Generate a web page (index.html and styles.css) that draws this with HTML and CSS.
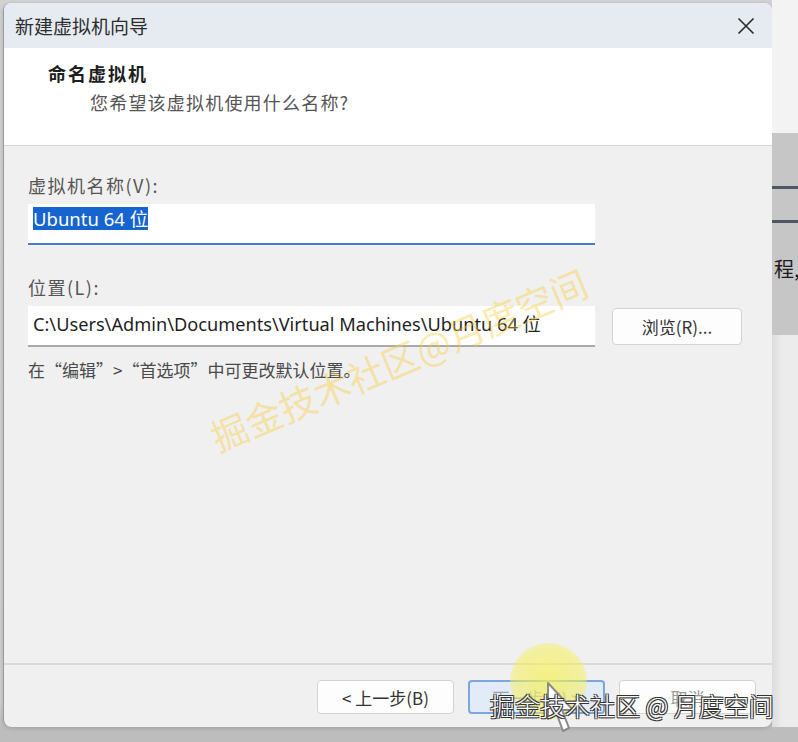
FILE: index.html
```html
<!DOCTYPE html>
<html lang="zh-CN">
<head>
    <meta charset="UTF-8">
    <meta name="viewport" content="width=device-width, initial-scale=1.0">
    <title>新建虚拟机向导</title>
    <link rel="stylesheet" href="styles.css">
</head>
<body>
    <div class="screen">
        <div class="dialog">
            <div class="titlebar">
                <span class="title">新建虚拟机向导</span>
                <svg class="close" width="18" height="18" viewBox="0 0 18 18">
                    <path d="M1.5 1.5 L16.5 16.5 M16.5 1.5 L1.5 16.5" stroke="#2a2a2a" stroke-width="1.6" fill="none"/>
                </svg>
            </div>

            <div class="header">
                <div class="header-title">命名虚拟机</div>
                <div class="header-sub">您希望该虚拟机使用什么名称?</div>
            </div>

            <div class="content">
                <div class="label">虚拟机名称(V):</div>
                <div class="field field-active"><span class="selected">Ubuntu 64 位</span></div>

                <div class="label label-gap">位置(L):</div>
                <div class="field-row">
                    <div class="field">C:\Users\Admin\Documents\Virtual Machines\Ubuntu 64 位</div>
                    <button class="btn btn-browse">浏览(R)...</button>
                </div>

                <div class="hint">在“编辑”&gt;“首选项”中可更改默认位置。</div>
            </div>

            <div class="footer">
                <button class="btn">&lt; 上一步(B)</button>
                <button class="btn btn-primary">下一步(N) &gt;</button>
                <button class="btn btn-cancel">取消</button>
            </div>
        </div>

        <div class="side">
            <div class="side-top"></div>
            <div class="side-band">
                <div class="side-line"></div>
                <div class="side-line"></div>
                <div class="side-text">程,</div>
            </div>
            <div class="side-bottom"></div>
        </div>
    </div>

    <!-- overlays from the recording -->
    <div class="watermark">掘金技术社区@月度空间</div>
    <div class="click-glow"></div>
    <svg class="cursor" width="30" height="54" viewBox="0 0 30 54">
        <path d="M2 2 L2 38 L10 31 L17 50 L23 47 L16 29 L27 29 Z" fill="#ffffff" stroke="#8a8a8a" stroke-width="2" stroke-linejoin="round"/>
    </svg>
    <div class="caption">掘金技术社区 @ 月度空间</div>
</body>
</html>
```

FILE: styles.css
```css
* {
    box-sizing: border-box;
}

body {
    margin: 0;
    width: 798px;
    height: 742px;
    overflow: hidden;
    background-color: #c4c4c4;
    font-family: "Noto Sans CJK SC", "Noto Sans", sans-serif;
    color: #333333;
    position: relative;
}

.screen {
    display: flex;
    height: 742px;
    background: linear-gradient(#d2d2d2, #cfcfcf 700px, #bdbdbd 730px);
}

.dialog {
    flex-shrink: 0;
    width: 769px;
    height: 724px;
    margin: 3px 0 0 3px;
    display: flex;
    flex-direction: column;
    background-color: #f0f0f0;
    border-left: 1px solid #9c9c9c;
    border-radius: 8px;
    overflow: hidden;
    box-shadow: 0 1px 4px rgba(0, 0, 0, 0.18);
}

.titlebar {
    height: 45px;
    flex-shrink: 0;
    display: flex;
    align-items: center;
    justify-content: space-between;
    padding: 0 17px 0 11px;
    background-color: #e6ebf2;
}

.title {
    font-size: 19px;
    color: #2d2d2d;
}

.header {
    height: 98px;
    flex-shrink: 0;
    background-color: #ffffff;
    border-bottom: 1px solid #d4d4d4;
    padding: 13px 0 0 44px;
}

.header-title {
    font-size: 18px;
    line-height: 24px;
    font-weight: bold;
    letter-spacing: 2px;
    color: #1e1e1e;
}

.header-sub {
    margin: 5px 0 0 42px;
    font-size: 18px;
    line-height: 24px;
    letter-spacing: 1.2px;
    color: #555555;
}

.content {
    flex: 1;
    padding: 27px 0 0 24px;
}

.label {
    font-size: 18px;
    line-height: 24px;
    letter-spacing: 1.5px;
    color: #555555;
    margin-bottom: 7px;
}

.label-gap {
    margin-top: 30px;
}

.field {
    width: 567px;
    height: 41px;
    background-color: #ffffff;
    border-bottom: 2px solid #a9a9a9;
    padding: 7px 0 0 5px;
    font-family: "Noto Sans", "Noto Sans CJK SC", sans-serif;
    font-size: 18.2px;
    line-height: 23px;
    color: #1f1f1f;
    white-space: nowrap;
}

.field-active {
    border-bottom-color: #4b7ccc;
    padding-top: 3px;
}

.selected {
    display: inline-block;
    background-color: #1664d0;
    color: #ffffff;
    font-size: 18.5px;
}

.field-row {
    display: flex;
    align-items: center;
    gap: 17px;
}

.hint {
    margin-top: 11px;
    font-size: 17px;
    line-height: 24px;
    color: #4a4a4a;
}

.btn {
    font-family: "Noto Sans CJK SC", "Noto Sans", sans-serif;
    font-size: 17px;
    color: #333333;
    background-color: #fdfdfd;
    border: 1px solid #d3d3d3;
    border-radius: 4px;
    cursor: pointer;
}

.btn-browse {
    width: 130px;
    height: 37px;
}

.footer {
    height: 64px;
    flex-shrink: 0;
    border-top: 2px solid #d9d9d9;
    display: flex;
    justify-content: flex-end;
    gap: 14px;
    padding: 15px 16px 0 0;
}

.footer .btn {
    width: 137px;
    height: 34px;
}

.btn-primary {
    background-color: #e2ecf8;
    border: 2px solid #7ba7dd;
    color: #9aa3ad;
}

.btn-cancel {
    color: #9a9a9a;
}

.side {
    flex: 1;
    display: flex;
    flex-direction: column;
    overflow: hidden;
}

.side-top {
    height: 133px;
    background-color: #f3f3f3;
}

.side-band {
    height: 202px;
    background-color: #c6c6c6;
    padding-top: 53px;
}

.side-line {
    height: 3px;
    background-color: #4f5862;
    margin-bottom: 31px;
}

.side-text {
    margin: 9px 0 0 2px;
    font-size: 20px;
    color: #1c1c1c;
    white-space: nowrap;
}

.side-bottom {
    height: 392px;
    background: linear-gradient(90deg, #dcdcdc, #ececec 10px);
}

.watermark {
    position: absolute;
    left: 212px;
    top: 418px;
    font-size: 37px;
    line-height: 40px;
    white-space: nowrap;
    color: rgba(248, 204, 60, 0.42);
    transform: rotate(-23deg);
    transform-origin: 0 50%;
}

.click-glow {
    position: absolute;
    left: 510px;
    top: 643px;
    width: 77px;
    height: 77px;
    border-radius: 50%;
    background: radial-gradient(rgba(245, 240, 90, 0.75), rgba(245, 240, 90, 0.55) 60%, rgba(245, 240, 90, 0.05));
}

.cursor {
    position: absolute;
    left: 546px;
    top: 681px;
}

.caption {
    position: absolute;
    left: 490px;
    top: 689px;
    font-size: 25px;
    line-height: 32px;
    font-weight: 300;
    color: #ffffff;
    white-space: nowrap;
    text-shadow: 1px 1px 0 #333, -1px -1px 0 #333, 1px -1px 0 #333, -1px 1px 0 #333;
}
```
